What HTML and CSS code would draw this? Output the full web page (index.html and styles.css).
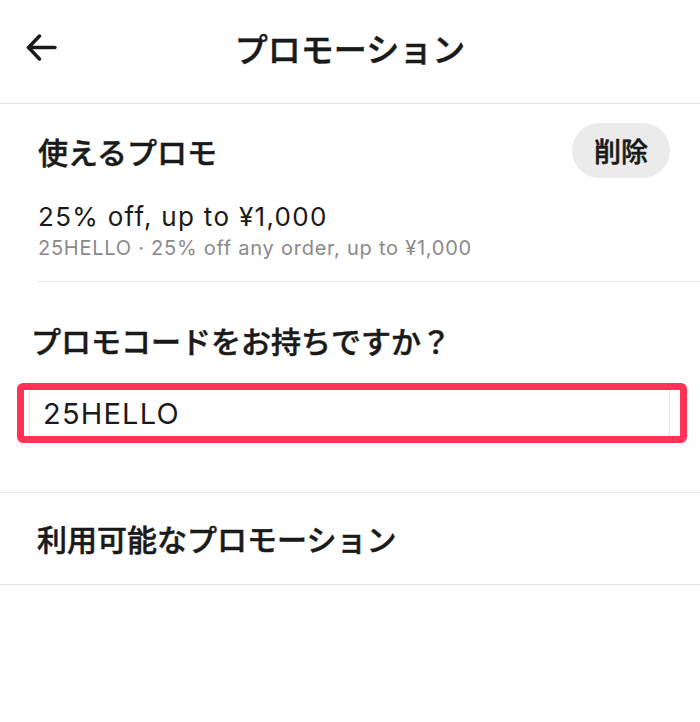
FILE: index.html
```html
<!DOCTYPE html>
<html lang="ja">
<head>
<meta charset="utf-8">
<title>プロモーション</title>
<link rel="stylesheet" href="styles.css">
</head>
<body>
<header class="topbar">
  <div class="topbar-left">
    <button class="back" aria-label="戻る">
      <svg width="31" height="27" viewBox="0 0 31 27" fill="none" stroke="#1a1a1a" stroke-width="3.4" stroke-linecap="round" stroke-linejoin="round">
        <path d="M2.5 13.5H29"/>
        <path d="M13.5 2L2.5 13.5L13.5 25"/>
      </svg>
    </button>
  </div>
  <h1 class="title">プロモーション</h1>
  <div></div>
</header>

<section class="current">
  <div class="current-head">
    <h2 class="heading">使えるプロモ</h2>
    <button class="pill">削除</button>
  </div>
  <div class="promo">
    <div class="promo-title">25% off, up to ¥1,000</div>
    <div class="promo-sub">25HELLO · 25% off any order, up to ¥1,000</div>
  </div>
</section>

<section class="code">
  <h2 class="heading">プロモコードをお持ちですか？</h2>
  <div class="field">
    <div class="field-inner">25HELLO</div>
  </div>
</section>

<section class="available">
  <h2 class="heading">利用可能なプロモーション</h2>
</section>
</body>
</html>
```

FILE: styles.css
```css
* { box-sizing: border-box; }

body {
  margin: 0;
  background: #ffffff;
  color: #1a1a1a;
  font-family: "Noto Sans CJK JP", "Noto Sans", sans-serif;
}

.topbar {
  display: grid;
  grid-template-columns: 1fr auto 1fr;
  align-items: center;
  height: 104px;
  padding-bottom: 8px;
  border-bottom: 1px solid #e4e4e4;
}

.topbar-left {
  padding-left: 26px;
  display: flex;
  align-items: center;
}

.back {
  border: 0;
  background: none;
  padding: 0;
  display: flex;
  cursor: pointer;
}

.title {
  margin: 0;
  font-size: 33px;
  font-weight: 500;
  line-height: 40px;
  -webkit-text-stroke: 0.5px #1a1a1a;
}

.heading {
  margin: 0;
  font-size: 30px;
  font-weight: 500;
  line-height: 40px;
  -webkit-text-stroke: 0.5px #1a1a1a;
}

.current {
  margin-left: 38px;
  padding: 19px 30px 19px 0;
  border-bottom: 1px solid #e4e4e4;
}

.current-head {
  display: flex;
  align-items: center;
  justify-content: space-between;
}

.pill {
  height: 55px;
  padding: 0 22px;
  border: 0;
  border-radius: 28px;
  background: #ebebeb;
  color: #1a1a1a;
  font-family: "Noto Sans CJK JP", sans-serif;
  font-size: 27px;
  font-weight: 500;
  -webkit-text-stroke: 0.5px #1a1a1a;
}

.promo {
  margin-top: 23px;
}

.promo-title {
  font-family: "Inter", "Noto Sans CJK JP", sans-serif;
  font-size: 26px;
  line-height: 32px;
  letter-spacing: 1.3px;
  color: #1a1a1a;
}

.promo-sub {
  margin-top: 1px;
  font-family: "Inter", "Noto Sans CJK JP", sans-serif;
  font-size: 20px;
  line-height: 28px;
  letter-spacing: 0.75px;
  color: #8a8a8a;
}

.code {
  padding: 38px 0 49px;
  border-bottom: 1px solid #e4e4e4;
}

.code .heading {
  padding-left: 31px;
}

.field {
  margin: 23px 13px 0 17px;
  height: 60px;
  border: 7px solid #ff3355;
  border-radius: 6px;
  display: flex;
}

.field-inner {
  flex: 1;
  margin: 0 10px 0 5px;
  border-left: 1px solid #e2e2e2;
  border-right: 1px solid #e2e2e2;
  display: flex;
  align-items: center;
  padding-left: 13px;
  font-family: "Inter", sans-serif;
  font-size: 29px;
  letter-spacing: 1.2px;
  color: #1a1a1a;
}

.available {
  padding: 25px 0 26px 37px;
  border-bottom: 1px solid #e4e4e4;
}
```
